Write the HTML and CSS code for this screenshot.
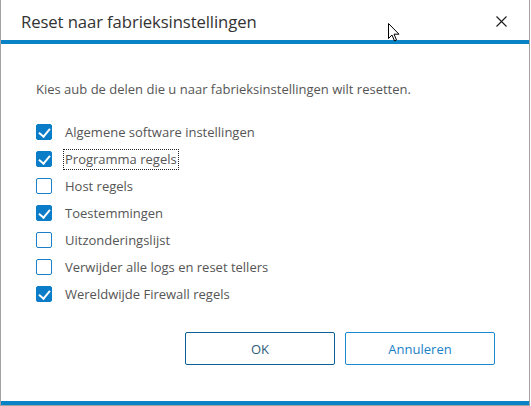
FILE: index.html
```html
<!DOCTYPE html>
<html>

<head>
    <title>Reset naar fabrieksinstellingen</title>
    <link rel="stylesheet" href="styles.css">
</head>

<body>
    <div class="window">
        <div class="titlebar">
            <span class="title">Reset naar fabrieksinstellingen</span>
            <span class="close">
                <svg width="11" height="11" viewBox="0 0 11 11">
                    <path d="M0.5 0.5 L10.5 10.5 M10.5 0.5 L0.5 10.5" stroke="#1a1a1a" stroke-width="1.1" fill="none"/>
                </svg>
            </span>
        </div>

        <div class="content">
            <p class="intro">Kies aub de delen die u naar fabrieksinstellingen wilt resetten.</p>

            <ul class="options">
                <li><span class="box checked"></span><span class="label">Algemene software instellingen</span></li>
                <li><span class="box checked"></span><span class="label focused">Programma regels</span></li>
                <li><span class="box"></span><span class="label">Host regels</span></li>
                <li><span class="box checked"></span><span class="label">Toestemmingen</span></li>
                <li><span class="box"></span><span class="label">Uitzonderingslijst</span></li>
                <li><span class="box"></span><span class="label">Verwijder alle logs en reset tellers</span></li>
                <li><span class="box checked"></span><span class="label">Wereldwijde Firewall regels</span></li>
            </ul>

            <div class="buttons">
                <button class="btn ok">OK</button>
                <button class="btn cancel">Annuleren</button>
            </div>
        </div>

        <div class="footer"></div>

        <!-- mouse pointer -->
        <svg class="cursor" width="12" height="19" viewBox="0 0 12 19">
            <path d="M0.5 0.5 L0.5 15.5 L4 12 L6.5 18 L8.5 17 L6 11.2 L11 11.2 Z" fill="#fff" stroke="#000" stroke-width="1"/>
        </svg>
    </div>
</body>

</html>
```

FILE: styles.css
```css
* {
    box-sizing: border-box;
}

body {
    margin: 0;
    background-color: #fff;
    font-family: "Open Sans", "Noto Sans", sans-serif;
}

.window {
    position: relative;
    width: 530px;
    height: 406px;
    border-left: 1px solid #a3a3a3;
    border-right: 1px solid #a3a3a3;
    border-bottom: 1px solid #a3a3a3;
    display: flex;
    flex-direction: column;
}

.titlebar {
    height: 44px;
    border-bottom: 4px solid #0a82c6;
    display: flex;
    align-items: center;
    justify-content: space-between;
    padding: 2px 22px 0 20px;
}

.title {
    font-size: 16.7px;
    color: #333;
    letter-spacing: -0.1px;
}

.close {
    display: flex;
    margin-top: 1px;
}

.content {
    flex: 1;
    padding: 0 34px 0 35px;
}

.intro {
    margin: 36px 0 26px;
    font-size: 13px;
    color: #555;
}

.options {
    list-style: none;
    margin: 0;
    padding: 0;
    display: flex;
    flex-direction: column;
    gap: 11px;
}

.options li {
    display: flex;
    align-items: center;
    height: 16px;
}

.box {
    width: 16px;
    height: 16px;
    border: 1px solid #1a80c8;
    border-radius: 2px;
    background-color: #fff;
    margin-right: 12px;
    flex-shrink: 0;
}

.box.checked {
    background-color: #0a7cc8;
    border-color: #0a7cc8;
    position: relative;
}

.box.checked::after {
    content: "";
    position: absolute;
    left: 4px;
    top: 1px;
    width: 5px;
    height: 9px;
    border-right: 2px solid #fff;
    border-bottom: 2px solid #fff;
    transform: rotate(40deg);
}

.label {
    font-size: 13px;
    color: #555;
    padding: 1px 1px;
    line-height: 17px;
}

.label.focused {
    outline: 1px dotted #222;
    outline-offset: 0;
}

.buttons {
    display: flex;
    justify-content: flex-end;
    gap: 10px;
    margin-top: 30px;
}

.btn {
    width: 150px;
    height: 33px;
    background-color: #fff;
    border-radius: 2px;
    font-family: "Open Sans", "Noto Sans", sans-serif;
    font-size: 13px;
    cursor: pointer;
}

.btn.ok {
    border: 1px solid #0b5f94;
    color: #2d5b7a;
}

.btn.cancel {
    border: 1px solid #1c8ad6;
    color: #1a7fc8;
}

.footer {
    height: 4px;
    background-color: #0a82c6;
}

.cursor {
    position: absolute;
    left: 387px;
    top: 23px;
}
```
